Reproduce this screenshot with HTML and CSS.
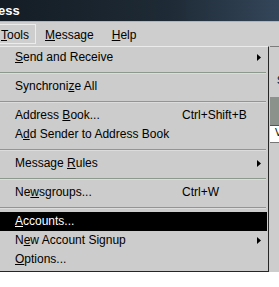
FILE: index.html
```html
<!DOCTYPE html>
<html lang="en">
<head>
    <meta charset="UTF-8">
    <title>Tools menu</title>
    <link rel="stylesheet" href="styles.css">
</head>
<body>
    <div class="screen">
        <div class="titlebar"><span class="title">ess</span></div>
        <div class="menubar">
            <span class="menu-title open"><u>T</u>ools</span>
            <span class="menu-title"><u>M</u>essage</span>
            <span class="menu-title"><u>H</u>elp</span>
        </div>
        <div class="workspace">
            <div class="side">
                <div class="side-head">S</div>
                <div class="side-band"></div>
                <div class="side-field">V</div>
            </div>
        </div>

        <div class="dropdown">
            <div class="item">
                <span class="label"><u>S</u>end and Receive</span>
                <span class="key"></span>
                <svg class="arrow" width="4" height="7" viewBox="0 0 4 7"><polygon points="0,0 4,3.5 0,7" fill="#000"/></svg>
            </div>
            <div class="sep"><div class="line"></div></div>
            <div class="item">
                <span class="label">Synchroni<u>z</u>e All</span>
            </div>
            <div class="sep"><div class="line"></div></div>
            <div class="item">
                <span class="label">Address <u>B</u>ook...</span>
                <span class="key">Ctrl+Shift+B</span>
            </div>
            <div class="item">
                <span class="label">A<u>d</u>d Sender to Address Book</span>
            </div>
            <div class="sep"><div class="line"></div></div>
            <div class="item">
                <span class="label">Message <u>R</u>ules</span>
                <span class="key"></span>
                <svg class="arrow" width="4" height="7" viewBox="0 0 4 7"><polygon points="0,0 4,3.5 0,7" fill="#000"/></svg>
            </div>
            <div class="sep"><div class="line"></div></div>
            <div class="item">
                <span class="label">Ne<u>w</u>sgroups...</span>
                <span class="key">Ctrl+W</span>
            </div>
            <div class="sep"><div class="line"></div></div>
            <div class="item active">
                <span class="label"><u>A</u>ccounts...</span>
            </div>
            <div class="item">
                <span class="label">N<u>e</u>w Account Signup</span>
                <span class="key"></span>
                <svg class="arrow" width="4" height="7" viewBox="0 0 4 7"><polygon points="0,0 4,3.5 0,7" fill="#000"/></svg>
            </div>
            <div class="item">
                <span class="label"><u>O</u>ptions...</span>
            </div>
        </div>
    </div>
</body>
</html>
```

FILE: styles.css
```css
* {
    margin: 0;
    padding: 0;
    box-sizing: border-box;
}

body {
    background: #fff;
    font-family: "Liberation Sans", Arial, sans-serif;
    font-size: 12px;
    color: #000;
    overflow: hidden;
}

.screen {
    position: relative;
    width: 279px;
    height: 287px;
    overflow: hidden;
}

/* window title */
.titlebar {
    height: 22px;
    background: linear-gradient(90deg, #141d25, #1e2a35 60%, #34465a);
    border-bottom: 1px solid #b4b4b4;
}
.title {
    display: block;
    margin-left: -2px;
    padding-top: 1px;
    line-height: 20px;
    font-size: 13px;
    font-weight: bold;
    color: #fff;
}

/* menu bar */
.menubar {
    display: flex;
    height: 24px;
    padding-top: 2px;
    background: #cecece;
}
.menu-title {
    height: 20px;
    padding: 3px 8px 0;
    line-height: 15px;
    border: 1px solid transparent;
}
.menu-title.open {
    margin-left: -8px;
    padding-right: 6px;
    border-color: #ececec;
}

/* window behind the menu */
.workspace {
    display: flex;
    justify-content: flex-end;
    height: 226px;
    background: #cdcdcd;
}
.side {
    width: 9px;
    border-top: 1px solid #7c7c7c;
}
.side-head {
    height: 50px;
    padding: 29px 0 0 7px;
    font-size: 10px;
    line-height: 10px;
}
.side-band {
    height: 28px;
    background: #8b928b;
}
.side-field {
    height: 18px;
    padding: 2px 0 0 5px;
    background: #fff;
    border-top: 1px solid #555;
    border-bottom: 1px solid #777;
    font-size: 10px;
    line-height: 10px;
}

/* dropdown */
.dropdown {
    position: absolute;
    top: 46px;
    left: -2px;
    width: 271px;
    padding: 1px 1px 2px;
    background: #cccccc;
    border-top: 1px solid #ebebeb;
    border-left: 1px solid #ebebeb;
    border-right: 1px solid #262626;
    border-bottom: 1px solid #262626;
}
.item {
    display: flex;
    align-items: center;
    height: 19px;
    padding: 0 6px 0 15px;
    line-height: 19px;
    white-space: nowrap;
}
.item.active {
    background: #000;
    color: #fff;
}
.label {
    width: 167px;
}
.key {
    flex: 1;
}
.sep {
    height: 10px;
    padding-top: 5px;
}
.line {
    margin-right: 1px;
    border-top: 1px solid #8e998e;
    border-bottom: 1px solid #dcdcdc;
}
```
